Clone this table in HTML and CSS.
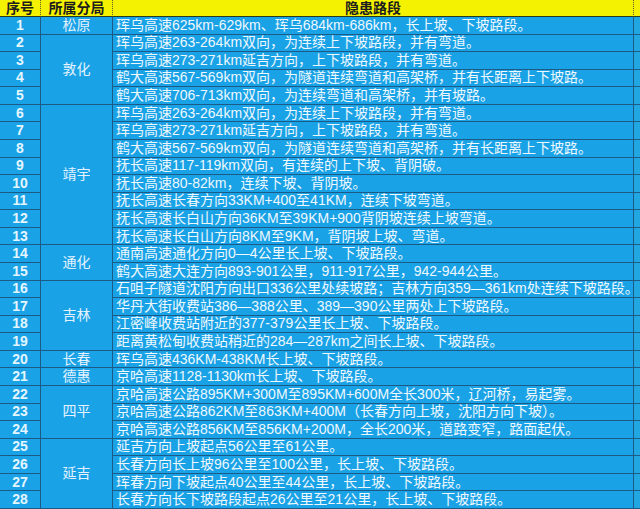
FILE: index.html
```html
<!DOCTYPE html>
<html lang="zh">
<head>
<meta charset="utf-8">
<link rel="stylesheet" href="styles.css">
</head>
<body>
<div class="sheet">
  <div class="h c1">序号</div>
  <div class="h c2">所属分局</div>
  <div class="h c3">隐患路段</div>
  <div class="h c4"></div>

  <div class="n">1</div><div class="d" style="grid-row: span 1">松原</div><div class="t">珲乌高速625km-629km、珲乌684km-686km，长上坡、下坡路段。</div><div class="e"></div>
  <div class="n">2</div><div class="d" style="grid-row: span 4">敦化</div><div class="t">珲乌高速263-264km双向，为连续上下坡路段，并有弯道。</div><div class="e"></div>
  <div class="n">3</div><div class="t">珲乌高速273-271km延吉方向，上下坡路段，并有弯道。</div><div class="e"></div>
  <div class="n">4</div><div class="t">鹤大高速567-569km双向，为隧道连续弯道和高架桥，并有长距离上下坡路。</div><div class="e"></div>
  <div class="n">5</div><div class="t">鹤大高速706-713km双向，为连续弯道和高架桥，并有坡路。</div><div class="e"></div>
  <div class="n">6</div><div class="d" style="grid-row: span 8">靖宇</div><div class="t">珲乌高速263-264km双向，为连续上下坡路段，并有弯道。</div><div class="e"></div>
  <div class="n">7</div><div class="t">珲乌高速273-271km延吉方向，上下坡路段，并有弯道。</div><div class="e"></div>
  <div class="n">8</div><div class="t">鹤大高速567-569km双向，为隧道连续弯道和高架桥，并有长距离上下坡路。</div><div class="e"></div>
  <div class="n">9</div><div class="t">抚长高速117-119km双向，有连续的上下坡、背阴破。</div><div class="e"></div>
  <div class="n">10</div><div class="t">抚长高速80-82km，连续下坡、背阴坡。</div><div class="e"></div>
  <div class="n">11</div><div class="t">抚长高速长春方向33KM+400至41KM，连续下坡弯道。</div><div class="e"></div>
  <div class="n">12</div><div class="t">抚长高速长白山方向36KM至39KM+900背阴坡连续上坡弯道。</div><div class="e"></div>
  <div class="n">13</div><div class="t">抚长高速长白山方向8KM至9KM，背阴坡上坡、弯道。</div><div class="e"></div>
  <div class="n">14</div><div class="d" style="grid-row: span 2">通化</div><div class="t">通南高速通化方向0—4公里长上坡、下坡路段。</div><div class="e"></div>
  <div class="n">15</div><div class="t">鹤大高速大连方向893-901公里，911-917公里，942-944公里。</div><div class="e"></div>
  <div class="n">16</div><div class="d" style="grid-row: span 4">吉林</div><div class="t">石咀子隧道沈阳方向出口336公里处续坡路；吉林方向359—361km处连续下坡路段。</div><div class="e"></div>
  <div class="n">17</div><div class="t">华丹大街收费站386—388公里、389—390公里两处上下坡路段。</div><div class="e"></div>
  <div class="n">18</div><div class="t">江密峰收费站附近的377-379公里长上坡、下坡路段。</div><div class="e"></div>
  <div class="n">19</div><div class="t">距离黄松甸收费站稍近的284—287km之间长上坡、下坡路段。</div><div class="e"></div>
  <div class="n">20</div><div class="d" style="grid-row: span 1">长春</div><div class="t">珲乌高速436KM-438KM长上坡、下坡路段。</div><div class="e"></div>
  <div class="n">21</div><div class="d" style="grid-row: span 1">德惠</div><div class="t">京哈高速1128-1130km长上坡、下坡路段。</div><div class="e"></div>
  <div class="n">22</div><div class="d" style="grid-row: span 3">四平</div><div class="t">京哈高速公路895KM+300M至895KM+600M全长300米，辽河桥，易起雾。</div><div class="e"></div>
  <div class="n">23</div><div class="t">京哈高速公路862KM至863KM+400M（长春方向上坡，沈阳方向下坡）。</div><div class="e"></div>
  <div class="n">24</div><div class="t">京哈高速公路856KM至856KM+200M，全长200米，道路变窄，路面起伏。</div><div class="e"></div>
  <div class="n">25</div><div class="d" style="grid-row: span 4">延吉</div><div class="t">延吉方向上坡起点56公里至61公里。</div><div class="e"></div>
  <div class="n">26</div><div class="t">长春方向长上坡96公里至100公里，长上坡、下坡路段。</div><div class="e"></div>
  <div class="n">27</div><div class="t">珲春方向下坡起点40公里至44公里，长上坡、下坡路段。</div><div class="e"></div>
  <div class="n">28</div><div class="t">长春方向长下坡路段起点26公里至21公里，长上坡、下坡路段。</div><div class="e"></div>
</div>
</body>
</html>
```

FILE: styles.css
```css
html, body {
  margin: 0;
  padding: 0;
  background: #1aa2e6;
}

.sheet {
  display: grid;
  grid-template-columns: 41px 72px 521px 6px;
  grid-template-rows: 17px repeat(28, minmax(0, 1fr));
  width: 640px;
  height: 509px;
  background: #1aa2e6;
  font-family: "Liberation Sans", "Noto Sans CJK SC", sans-serif;
  font-size: 14px;
  color: #e9f6ff;
}

.sheet > div {
  box-sizing: border-box;
  display: flex;
  align-items: center;
  white-space: nowrap;
  line-height: 15px;
}

.h {
  background: #f4f200;
  color: #1d1d1d;
  font-weight: bold;
  font-size: 14px;
  justify-content: center;
  border-bottom: 1px solid #2b3a1a;
  border-right: 1px dotted #5a5a2a;
}

.h.c4 {
  border-right: none;
}

.n {
  justify-content: center;
  font-weight: bold;
  font-size: 14px;
  color: #e4f6ff;
  border-right: 1px solid #1d5a86;
  border-bottom: 1px solid #1d5a86;
}

.d {
  justify-content: center;
  color: #e4f2ff;
  border-right: 1px solid #1d5a86;
  border-bottom: 1px solid #1d5a86;
}

.t {
  padding-left: 3px;
  color: #eef8ff;
  border-right: 1px solid #1d5a86;
  border-bottom: 1px solid #1d5a86;
}

.e {
  background: #22a6e2;
  border-bottom: 1px solid #1d5a86;
}
```
